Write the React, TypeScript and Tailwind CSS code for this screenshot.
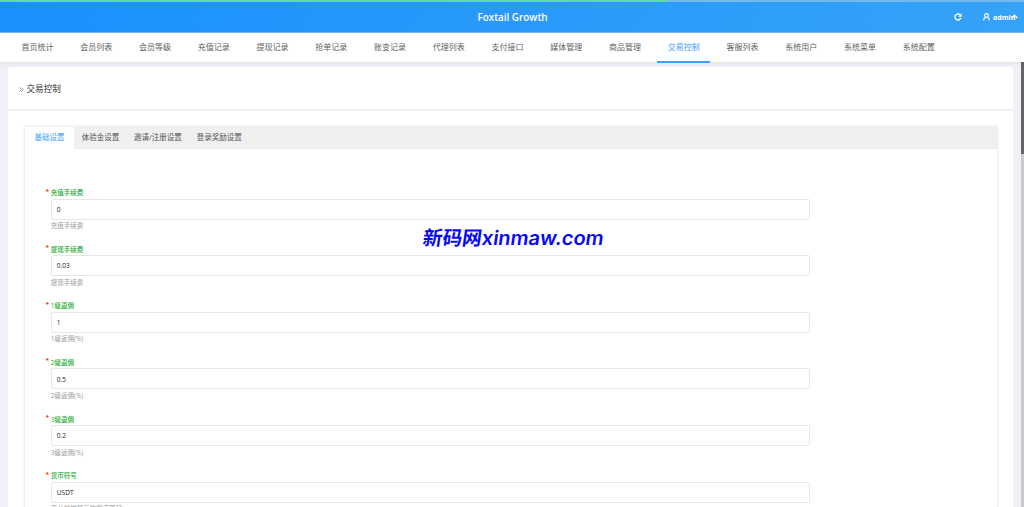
import React from "react";

const menu = ["首页统计", "会员列表", "会员等级", "充值记录", "提现记录", "抢单记录", "账变记录", "代理列表", "支付接口", "媒体管理", "商品管理", "交易控制", "客服列表", "系统用户", "系统菜单", "系统配置"];
const tabs = ["基础设置", "体验金设置", "邀请/注册设置", "登录奖励设置"];
const fields = [
  { label: "充值手续费", value: "0", hint: "充值手续费" },
  { label: "提现手续费", value: "0.03", hint: "提现手续费" },
  { label: "1级返佣", value: "1", hint: "1级返佣(%)" },
  { label: "2级返佣", value: "0.5", hint: "2级返佣(%)" },
  { label: "3级返佣", value: "0.2", hint: "3级返佣(%)" },
  { label: "货币符号", value: "USDT", hint: "平台前端显示的货币符号" },
];

function Header() {
  return (
    <header className="relative flex h-[33px] shrink-0 items-center justify-center bg-linear-135 from-[#1890ff] to-[#36a3f7] border-b border-[#74bdfb] text-white">
      <div className="absolute inset-x-0 top-0 h-[1.5px] bg-[#72b9ee]">
        <div className="h-full w-[667px] bg-[#5fdba7]" />
      </div>
      <h1 className="pt-[3px] pl-[1px] font-['Open_Sans','Noto_Sans',sans-serif] text-[9.9px] font-semibold leading-none">Foxtail Growth</h1>
      <div className="absolute right-[6.5px] top-0 flex h-[34px] items-center">
        <svg className="mr-[21px] h-[8px] w-[8px]" viewBox="0 0 16 16" fill="none" stroke="currentColor" strokeWidth="2.8">
          <path d="M13.6 10.2A6 6 0 1 1 12.3 3.8" />
          <path d="M15.5 0.5v7h-7z" fill="currentColor" stroke="none" />
        </svg>
        <svg className="mr-[3px] h-[8px] w-[7px]" viewBox="0 0 14 16" fill="none" stroke="currentColor" strokeWidth="2.4">
          <circle cx="7" cy="5" r="3.7" />
          <path d="M1.2 15c0-3.5 2-5.6 4.2-6.2M12.8 15c0-3.5-2-5.6-4.2-6.2" />
        </svg>
        <span className="w-[17.5px] whitespace-nowrap font-['Open_Sans',sans-serif] text-[7px] font-bold leading-none">admin</span>
        <svg className="h-[6px] w-[7px]" viewBox="0 0 14 12" fill="none" stroke="currentColor" strokeWidth="2.2">
          <path d="M1 8l6-6 6 6M7 2v9" />
        </svg>
      </div>
    </header>
  );
}

function Field({ label, value, hint }: { label: string; value: string; hint: string }) {
  return (
    <div className="h-[56.67px] shrink-0">
      <div className="relative h-[10.5px] whitespace-nowrap text-[6.5px] leading-[9.5px] font-medium text-[#20a92e]">
        <span className="absolute -left-[5px] -top-[1.5px] text-[6px] font-bold text-[#ff2020]">*</span>
        {label}
      </div>
      <div className="flex h-[21px] w-[759px] items-center rounded-[2px] border border-[#e6e7eb] pt-px pl-[5px] text-[6.6px] text-[#222]">{value}</div>
      <div className="pt-[1.5px] text-[6.5px] leading-[9px] whitespace-nowrap text-[#999]">{hint}</div>
    </div>
  );
}

export default function App() {
  return (
    <div className="relative flex h-[507px] w-[1024px] flex-col overflow-hidden bg-[#f0f1f6] font-['Open_Sans','Noto_Sans_CJK_SC',sans-serif]">
      <Header />
      <nav className="z-10 flex h-[29px] shrink-0 gap-[5.25px] bg-white pl-[10.7px] shadow-[0_1px_4px_rgba(0,21,41,0.08)]">
        {menu.map((name) => (
          <a
            key={name}
            className={
              name === "交易控制"
                ? "relative w-[53.5px] text-center text-[8px] leading-[28px] whitespace-nowrap text-[#409eff] after:absolute after:inset-x-0 after:-bottom-px after:h-[2px] after:bg-[#409eff]"
                : "w-[53.5px] text-center text-[8px] leading-[28px] whitespace-nowrap text-[#606266]"
            }
          >
            {name}
          </a>
        ))}
      </nav>
      <div className="flex min-h-0 flex-1 justify-between">
        <main className="mt-[5px] ml-[8px] flex w-[1005px] flex-col rounded-t-[3px] bg-white">
          <div className="flex h-[44px] shrink-0 items-center border-b-2 border-[#f0f0f2] pt-[2px] pl-[10.5px]">
            <svg className="mr-[3px] h-[5px] w-[5px]" viewBox="0 0 10 10" fill="none" stroke="#888" strokeWidth="1.6">
              <path d="M1 1l4 4-4 4M5 1l4 4-4 4" />
            </svg>
            <h2 className="text-[8.6px] leading-none text-[#333]">交易控制</h2>
          </div>
          <section className="mt-[14.5px] ml-[15.5px] flex min-h-0 w-[974.5px] flex-1 flex-col rounded-t-[2px] border-x-[1.5px] border-t border-[#eeeeef] shadow-[0_0_3px_rgba(0,0,0,0.06)]">
            <div className="flex h-[22.5px] shrink-0 border-b border-[#ececec] bg-[#f0f0f0] text-[7.5px] leading-[21px] text-[#555]">
              {tabs.map((tab, i) => (
                <div key={tab} className={i === 0 ? "h-[22.5px] w-[49.5px] bg-white pl-[0.5px] text-center text-[#409eff]" : "ml-[7.7px] mr-[7.2px] whitespace-nowrap"}>
                  {tab}
                </div>
              ))}
            </div>
            <form className="flex min-h-0 flex-1 flex-col overflow-hidden pt-[39px] pl-[26.3px]">
              {fields.map((field) => (
                <Field key={field.label} {...field} />
              ))}
            </form>
          </section>
        </main>
        <div className="w-[3px] bg-[#cbcbcb]">
          <div className="h-[92px] bg-[#646464]" />
        </div>
      </div>
      <div className="absolute left-[422.5px] top-[225px] z-20 flex items-baseline -skew-x-8 whitespace-nowrap leading-[24px] text-[#0808f4]">
        <span className="font-['Noto_Sans_CJK_SC',sans-serif] text-[19.7px] font-bold">新码网</span>
        <span className="font-['Inter',sans-serif] text-[20px] font-semibold">xinmaw.com</span>
      </div>
    </div>
  );
}
